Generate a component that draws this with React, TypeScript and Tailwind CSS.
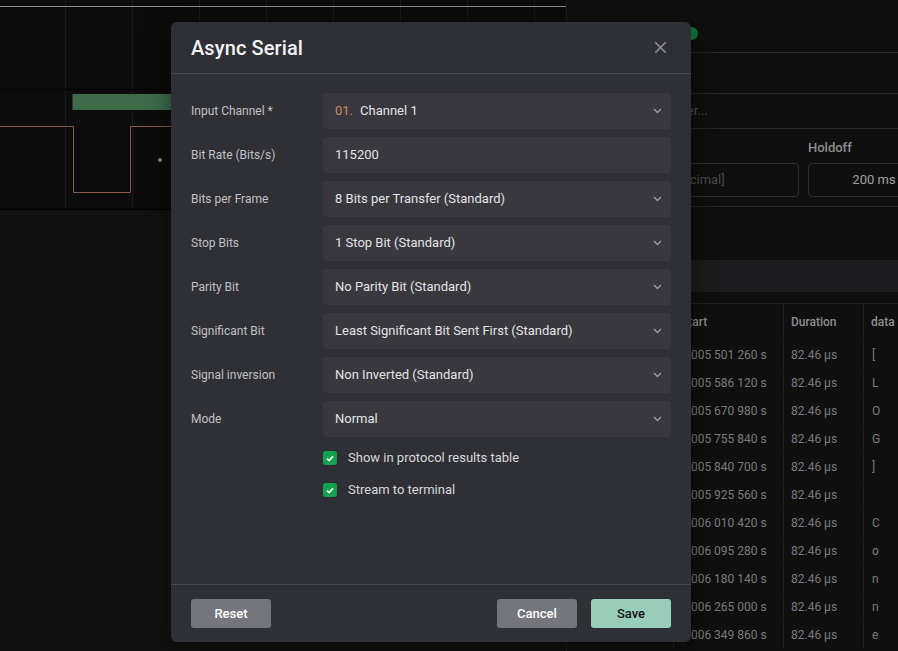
import { X } from "lucide-react";

const rows = [
  ["0.005 501 260 s", "["],
  ["0.005 586 120 s", "L"],
  ["0.005 670 980 s", "O"],
  ["0.005 755 840 s", "G"],
  ["0.005 840 700 s", "]"],
  ["0.005 925 560 s", ""],
  ["0.006 010 420 s", "C"],
  ["0.006 095 280 s", "o"],
  ["0.006 180 140 s", "n"],
  ["0.006 265 000 s", "n"],
  ["0.006 349 860 s", "e"],
];

const fields = [
  { label: "Input Channel *", value: "Channel 1", prefix: "01.", select: true },
  { label: "Bit Rate (Bits/s)", value: "115200", select: false },
  { label: "Bits per Frame", value: "8 Bits per Transfer (Standard)", select: true },
  { label: "Stop Bits", value: "1 Stop Bit (Standard)", select: true },
  { label: "Parity Bit", value: "No Parity Bit (Standard)", select: true },
  { label: "Significant Bit", value: "Least Significant Bit Sent First (Standard)", select: true },
  { label: "Signal inversion", value: "Non Inverted (Standard)", select: true },
  { label: "Mode", value: "Normal", select: true },
];

export default function App() {
  return (
    <div className="relative w-[898px] h-[651px] overflow-hidden bg-[#111111] font-['Roboto','Liberation_Sans',sans-serif]">
      {/* background app */}
      <div className="flex h-full">
        <div className="w-[567px] shrink-0 flex flex-col border-r border-[#1f1f1f]">
          <Waveform />
          <div className="flex-1 bg-[#111111]" />
        </div>
        <RightPanel />
      </div>

      {/* modal */}
      <div className="absolute left-[171px] top-[22px] w-[520px] h-[620px] rounded-[6px] bg-[#2f3036] flex flex-col shadow-[0_4px_24px_rgba(0,0,0,0.5)]">
        <div className="h-[52px] shrink-0 flex items-center justify-between px-5 border-b border-[#46474c]">
          <h2 className="text-[20px] font-medium text-[#f3f3f5] tracking-[0.1px]">Async Serial</h2>
          <X size={19} strokeWidth={2.2} className="text-[#8d8e93] mr-[1px]" />
        </div>

        <div className="flex-1 px-5 pt-[19px]">
          <div className="flex flex-col gap-2">
            {fields.map((f) => (
              <div key={f.label} className="flex items-center">
                <label className="w-[132px] shrink-0 text-[12px] text-[#c0c0c5]">{f.label}</label>
                <Field {...f} />
              </div>
            ))}
          </div>
          <div className="ml-[132px] mt-[14px] flex flex-col gap-[18px]">
            <Check label="Show in protocol results table" />
            <Check label="Stream to terminal" />
          </div>
        </div>

        <div className="h-[58px] shrink-0 border-t border-[#46474c] flex items-start justify-between px-5 pt-[14px]">
          <button className="w-[80px] h-[29px] rounded-[3px] bg-[#75757d] text-white text-[13px] font-medium">Reset</button>
          <div className="flex gap-[14px]">
            <button className="w-[80px] h-[29px] rounded-[3px] bg-[#75757d] text-white text-[13px] font-medium">Cancel</button>
            <button className="w-[80px] h-[29px] rounded-[3px] bg-[#97cdb9] text-[#151515] text-[13px] font-medium">Save</button>
          </div>
        </div>
      </div>
    </div>
  );
}

function Field({ value, prefix, select }: { value: string; prefix?: string; select: boolean }) {
  return (
    <div className="flex-1 h-9 rounded-[4px] bg-[#38383e] flex items-center justify-between pl-3 pr-[9px] text-[13px] text-[#e3e3e6]">
      <span>
        {prefix && <span className="text-[#c98a6c] mr-[7px]">{prefix}</span>}
        {value}
      </span>
      {select && (
        <svg width="9" height="6" viewBox="0 0 9 6" fill="none">
          <path d="M1 1l3.5 3.5L8 1" stroke="#9d9da3" strokeWidth="1.4" />
        </svg>
      )}
    </div>
  );
}

function Check({ label }: { label: string }) {
  return (
    <div className="flex items-center h-[14px]">
      <div className="w-[14px] h-[14px] rounded-[3px] bg-[#12a150] flex items-center justify-center">
        <svg width="8" height="7" viewBox="0 0 8 7" fill="none">
          <path d="M1 3.6l2 2L7 1.4" stroke="#ffffff" strokeWidth="1.6" />
        </svg>
      </div>
      <span className="ml-[11px] text-[13px] text-[#d7d7db]">{label}</span>
    </div>
  );
}

function Waveform() {
  const grid = [65, 132, 199, 266, 333, 400, 467, 534];
  return (
    <svg width="566" height="210" className="block shrink-0">
      <rect x="0" y="0" width="566" height="210" fill="#0c0c0c" />
      {grid.map((x) => (
        <line key={x} x1={x + 0.5} y1="0" x2={x + 0.5} y2="208" stroke="#191919" />
      ))}
      <line x1="0" y1="6.5" x2="566" y2="6.5" stroke="#8e8e8e" />
      <line x1="0" y1="89.5" x2="566" y2="89.5" stroke="#050505" strokeWidth="1.5" />
      <rect x="72" y="94" width="1" height="16" fill="#2a3a2e" />
      <rect x="73" y="94" width="493" height="16" fill="#3f6b4b" />
      <path d="M0 126.5H73.5V192.5H130.5V126.5H566" fill="none" stroke="#8a5a48" strokeWidth="1" />
      <circle cx="160" cy="160" r="2" fill="#8a8a8a" />
      <line x1="0" y1="209.5" x2="566" y2="209.5" stroke="#030303" strokeWidth="1.5" />
    </svg>
  );
}

function RightPanel() {
  return (
    <div className="flex-1 min-w-0 flex flex-col bg-[#0f0f0f] text-[12px]">
      <div className="relative h-[53px] shrink-0 border-b border-[#262626]">
        <div className="absolute left-[118px] top-[27px] w-[13px] h-[13px] rounded-full bg-[#0c7a3a]" />
      </div>
      <div className="h-[41px] shrink-0 border-b border-[#262626]" />
      <div className="h-[35px] shrink-0 border-b border-[#262626] flex items-center pl-[102px] text-[13px] text-[#4f4f4f]">
        Filter...
      </div>
      <div className="h-[78px] shrink-0 border-b border-[#262626] pt-[9px] pl-[88px] flex gap-[9px]">
        <div className="w-[144px] shrink-0 flex flex-col">
          <div className="h-[20px]" />
          <div className="mt-[5px] h-[34px] rounded-[4px] border border-[#2d2d2d] flex items-center pl-[16px] text-[13px] text-[#4a4a4a]">
            [decimal]
          </div>
        </div>
        <div className="w-[132px] shrink-0 flex flex-col">
          <div className="h-[20px] font-medium text-[#8e8e8e] text-[13px]">Holdoff</div>
          <div className="mt-[5px] h-[34px] rounded-[4px] border border-[#2d2d2d] flex items-center justify-center text-[13px] text-[#a0a0a0]">
            200 ms
          </div>
        </div>
      </div>
      <div className="h-[53px] shrink-0" />
      <div className="h-[32px] shrink-0 bg-[#1c1c1e]" />
      <div className="h-[11px] shrink-0" />
      <div className="border-t border-[#1f1f1f]">
        <div className="flex h-[36px] items-center font-medium text-[#8e8e8e]">
          <div className="w-[106px] shrink-0 h-full" />
          <div className="w-[110px] shrink-0 h-full flex items-center pl-[7px] border-l border-[#222]">Start</div>
          <div className="w-[80px] shrink-0 h-full flex items-center pl-[7px] border-l border-[#222]">Duration</div>
          <div className="w-[80px] shrink-0 h-full flex items-center pl-[7px] border-l border-[#222]">data</div>
        </div>
        {rows.map(([t, d], i) => (
          <div key={i} className="flex h-[28px] items-center pt-[1px] text-[#7b7b7b]">
            <div className="w-[106px] shrink-0 h-full" />
            <div className="w-[110px] shrink-0 h-full flex items-center pl-[7px] border-l border-[#222] whitespace-nowrap">{t}</div>
            <div className="w-[80px] shrink-0 h-full flex items-center pl-[7px] border-l border-[#222]">82.46 µs</div>
            <div className="w-[80px] shrink-0 h-full flex items-center pl-[8px] border-l border-[#222]">{d}</div>
          </div>
        ))}
      </div>
    </div>
  );
}
